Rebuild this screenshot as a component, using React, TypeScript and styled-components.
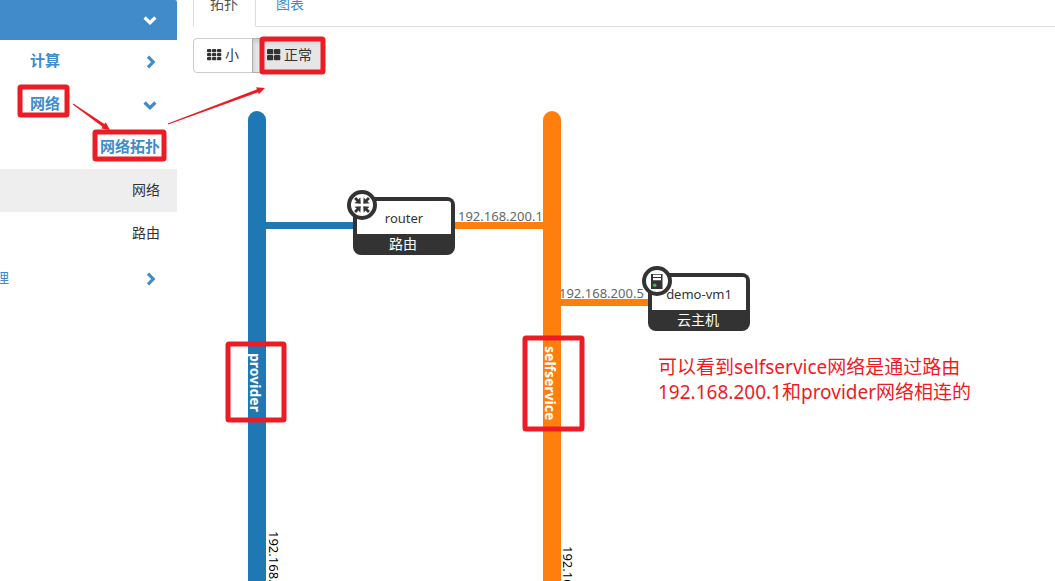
import React from "react";
import styled, { createGlobalStyle, css } from "styled-components";

const ui = `"Noto Sans", "Noto Sans CJK SC", sans-serif`;
const red = "#ed1c24";
const link = "#428bca";
const dark = "#333333";

const GlobalStyle = createGlobalStyle`
  *, *::before, *::after { box-sizing: border-box; }
  body { margin: 0; background: #fff; color: ${dark}; font: 14px/20px ${ui}; }
`;

const Page = styled.div`
  position: relative;
  display: flex;
  height: 100vh;
  overflow: hidden;
`;

const Sidebar = styled.nav`
  flex: 0 0 177px;
  overflow: hidden;
`;

const PanelHeader = styled.button`
  display: flex;
  align-items: center;
  justify-content: flex-end;
  width: 100%;
  height: 40px;
  padding: 0 20px;
  border: 0;
  border-radius: 0 2px 0 0;
  background: ${link};
  color: #fff;
`;

const GroupButton = styled.button<{ $cut?: boolean }>`
  display: flex;
  align-items: center;
  justify-content: space-between;
  width: 100%;
  height: 43px;
  padding: 0 20px 0 30px;
  border: 0;
  background: none;
  color: ${link};
  font: bold 15px/20px ${ui};
  & > span { padding-bottom: 4px; }
  ${(p) =>
    p.$cut &&
    css`
      margin-top: 2px;
      padding-left: 0;
      font: 14px/20px ${ui};
      & > span { margin-left: -5px; padding-bottom: 2px; }
    `}
`;

const PanelLink = styled.a<{ $active?: boolean; $hover?: boolean }>`
  display: flex;
  align-items: center;
  justify-content: flex-end;
  height: 43px;
  padding: 0 17px ${(p) => (p.$active ? 4 : 2)}px;
  text-decoration: none;
  color: ${(p) => (p.$active ? link : dark)};
  background: ${(p) => (p.$hover ? "#eeeeee" : "transparent")};
  font-size: ${(p) => (p.$active ? 15 : 14)}px;
  font-weight: ${(p) => (p.$active ? 700 : 400)};
`;

const Main = styled.main`
  flex: 1;
  min-width: 0;
  display: flex;
  flex-direction: column;
  padding-left: 16px;
`;

const Tabs = styled.div`
  display: flex;
  margin-top: -16px;
  border-bottom: 1px solid #ddd;
`;

const Tab = styled.a<{ $active?: boolean }>`
  height: 43px;
  margin-right: 3px;
  margin-bottom: -1px;
  padding: 9px 17px 9px 16px;
  border: 1px solid transparent;
  color: ${link};
  text-decoration: none;
  ${(p) =>
    p.$active &&
    css`
      color: #555;
      border-color: #ddd #ddd #fff;
      background: #fff;
    `}
`;

const Toolbar = styled.div`
  display: flex;
  padding-top: 11px;
`;

const SizeButton = styled.button<{ $pressed?: boolean }>`
  display: flex;
  align-items: center;
  gap: 3px;
  height: 35px;
  padding: 0 13px 2px;
  border: 1px solid #ccc;
  border-radius: 4px 0 0 4px;
  background: #fff;
  color: ${dark};
  font: 14px/20px ${ui};
  ${(p) =>
    p.$pressed &&
    css`
      margin-left: -1px;
      padding: 0 12px 2px 14px;
      gap: 2px;
      border-color: #adadad;
      border-radius: 0 4px 4px 0;
      background: #e6e6e6;
      box-shadow: inset 0 3px 5px rgba(0, 0, 0, 0.125);
    `}
`;

const Topology = styled.svg`
  flex: 1;
  display: block;
  width: 100%;
  min-height: 0;
  overflow: hidden;
  font-family: ${ui};
`;

const NetName = styled.text`
  font-size: 14px;
  font-weight: 700;
  fill: #fff;
`;

const Cidr = styled.text`
  font-size: 13px;
  fill: #000;
`;

const PortIp = styled.text`
  font-size: 13px;
  fill: #666;
`;

const NodeName = styled.text`
  font-size: 13px;
  fill: ${dark};
  text-anchor: middle;
`;

const NodeKind = styled.text`
  font-size: 14px;
  fill: #fff;
  text-anchor: middle;
`;

const Markup = styled.svg`
  position: absolute;
  top: 0;
  left: 0;
  width: 100%;
  height: 100%;
  pointer-events: none;
`;

const Note = styled.p`
  position: absolute;
  top: 355px;
  left: 658px;
  margin: 0;
  color: ${red};
  font: 19px/25px ${ui};
  white-space: nowrap;
`;

const Chevron = ({ down }: { down?: boolean }) => (
  <svg width="14" height="14" viewBox="0 0 14 14" fill="none" stroke="currentColor" strokeWidth="3.2" aria-hidden="true">
    <path d={down ? "M1.6 4.5 7 9.7 12.4 4.5" : "M5 1.6 10.2 7 5 12.4"} />
  </svg>
);

const Cells = ({ xs, ys, w, h }: { xs: number[]; ys: number[]; w: number; h: number }) => (
  <svg width="15" height="12" viewBox="0 0 15 12" fill="currentColor" aria-hidden="true">
    {ys.map((y) => xs.map((x) => <rect key={`${x}-${y}`} x={x} y={y} width={w} height={h} rx="1" />))}
  </svg>
);

type NodeProps = { x: number; y: number; name: string; kind: string; children: React.ReactNode };

const DeviceNode = ({ x, y, name, kind, children }: NodeProps) => (
  <g transform={`translate(${x} ${y})`}>
    <rect width="102" height="58" rx="8" fill={dark} />
    <path d="M4 4H95a3 3 0 0 1 3 3V37H4Z" fill="#fff" />
    <circle cx="9" cy="8" r="13" fill="#fff" stroke={dark} strokeWidth="4" />
    <g transform="translate(9 8)">{children}</g>
    <NodeName x="51" y="26">{name}</NodeName>
    <NodeKind x="50" y="52">{kind}</NodeKind>
  </g>
);

const Arrow = ({ x1, y1, x2, y2 }: { x1: number; y1: number; x2: number; y2: number }) => {
  const len = Math.hypot(x2 - x1, y2 - y1);
  const angle = (Math.atan2(y2 - y1, x2 - x1) * 180) / Math.PI;
  return (
    <path
      transform={`translate(${x1} ${y1}) rotate(${angle})`}
      d={`M0 -.5 L${len - 8} -1.6 V-3.8 L${len} 0 L${len - 8} 3.8 V1.6 L0 .5Z`}
      fill={red}
    />
  );
};

const boxes = [
  { x: 20, y: 87, w: 47, h: 28 },
  { x: 95, y: 132, w: 69, h: 27 },
  { x: 262, y: 39, w: 61, h: 33 },
  { x: 228, y: 344, w: 56, h: 76 },
  { x: 525, y: 338, w: 57, h: 91 },
];

export default function App() {
  return (
    <Page>
      <GlobalStyle />
      <Sidebar>
        <PanelHeader aria-label="项目"><Chevron down /></PanelHeader>
        <GroupButton><span>计算</span><Chevron /></GroupButton>
        <GroupButton><span>网络</span><Chevron down /></GroupButton>
        <PanelLink href="#topology" $active>网络拓扑</PanelLink>
        <PanelLink href="#networks" $hover>网络</PanelLink>
        <PanelLink href="#routers">路由</PanelLink>
        <GroupButton $cut><span>理</span><Chevron /></GroupButton>
      </Sidebar>
      <Main>
        <Tabs>
          <Tab href="#topology" $active>拓扑</Tab>
          <Tab href="#graph">图表</Tab>
        </Tabs>
        <Toolbar>
          <SizeButton><Cells xs={[0, 5, 10]} ys={[0, 4, 8]} w={4.3} h={3.2} />小</SizeButton>
          <SizeButton $pressed><Cells xs={[0, 7]} ys={[0, 6]} w={6.3} h={5.2} />正常</SizeButton>
        </Toolbar>
        <Topology role="img" aria-label="网络拓扑">
          <g transform="translate(-193 -73)">
            <rect x="248" y="111" width="18" height="2000" rx="9" fill="#1f77b4" />
            <rect x="543" y="111" width="18" height="2000" rx="9" fill="#ff7f0e" />
            <rect x="266" y="222" width="90" height="7" fill="#1f77b4" />
            <rect x="454" y="222" width="90" height="7" fill="#ff7f0e" />
            <rect x="560" y="299" width="90" height="7" fill="#ff7f0e" />
            <NetName transform="translate(250 353) rotate(90)">provider</NetName>
            <NetName transform="translate(545 346) rotate(90)">selfservice</NetName>
            <Cidr transform="translate(269 531) rotate(90)">192.168.</Cidr>
            <Cidr transform="translate(563 546) rotate(90)">192.168.</Cidr>
            <PortIp x="458" y="221">192.168.200.1</PortIp>
            <PortIp x="559" y="298">192.168.200.5</PortIp>
            <DeviceNode x={353} y={197} name="router" kind="路由">
              <g fill={dark}>
                {[45, 135, 225, 315].map((a) => (
                  <path key={a} transform={`rotate(${a})`} d="M9.8 -1.4H6.3L6.6 -4.2 1.7 0 6.6 4.2 6.3 1.4H9.8Z" />
                ))}
              </g>
            </DeviceNode>
            <DeviceNode x={648} y={273} name="demo-vm1" kind="云主机">
              <rect x="-6" y="-7" width="11.5" height="15" fill={dark} />
              <path d="M-4 -5.2H4M-4 -1.8H4" stroke="#fff" strokeWidth="2.2" />
              <circle cx="-2.3" cy="4.3" r="1.8" fill="#3fb950" />
            </DeviceNode>
          </g>
        </Topology>
      </Main>
      <Markup aria-hidden="true">
        {boxes.map((b) => (
          <rect key={b.x} x={b.x} y={b.y} width={b.w} height={b.h} rx="1" fill="none" stroke={red} strokeWidth="5" />
        ))}
        <Arrow x1={73} y1={104} x2={110} y2={130} />
        <Arrow x1={168} y1={124} x2={265} y2={88} />
      </Markup>
      <Note>可以看到selfservice网络是通过路由<br />192.168.200.1和provider网络相连的</Note>
    </Page>
  );
}
